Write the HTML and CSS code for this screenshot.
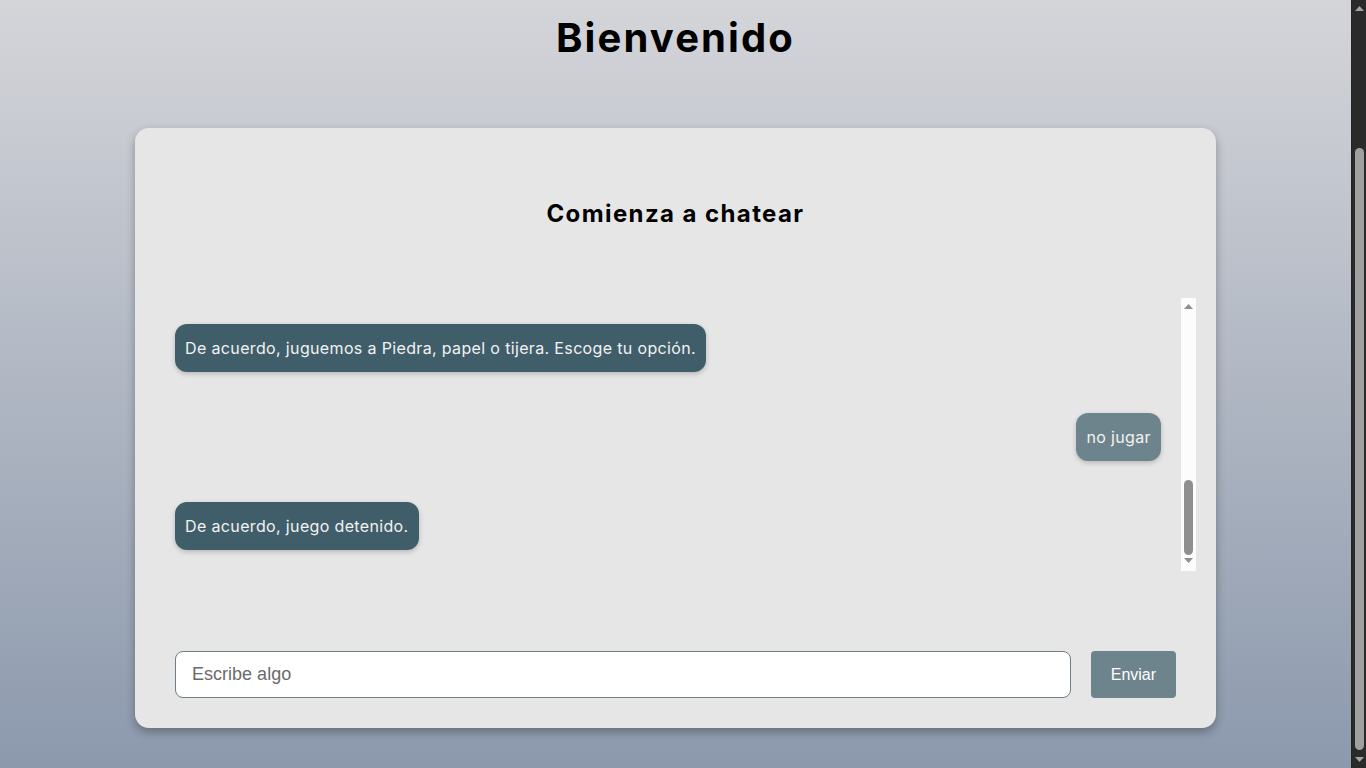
FILE: index.html
```html
<!DOCTYPE html>
<html lang="es">
<head>
<meta charset="utf-8">
<title>Chat</title>
<link rel="stylesheet" href="styles.css">
</head>
<body>
<div class="viewport">
  <div class="page">
    <h1 class="title">Bienvenido</h1>
    <main class="card">
      <h2 class="card-title">Comienza a chatear</h2>
      <div class="chat">
        <div class="messages">
          <div class="msg bot">De acuerdo, juguemos a Piedra, papel o tijera. Escoge tu opción.</div>
          <div class="msg user">no jugar</div>
          <div class="msg bot">De acuerdo, juego detenido.</div>
        </div>
        <div class="sbar sbar-light">
          <svg class="arrow" width="9" height="5" viewBox="0 0 9 5"><path d="M0 5 L4.5 0 L9 5 Z"/></svg>
          <div class="track"><div class="thumb thumb-light"></div></div>
          <svg class="arrow" width="9" height="5" viewBox="0 0 9 5"><path d="M0 0 L4.5 5 L9 0 Z"/></svg>
        </div>
      </div>
      <form class="composer">
        <input class="composer-input" type="text" placeholder="Escribe algo" autofocus>
        <button class="composer-btn" type="button">Enviar</button>
      </form>
    </main>
  </div>
  <div class="sbar sbar-dark">
    <svg class="arrow" width="9" height="5" viewBox="0 0 9 5"><path d="M0 5 L4.5 0 L9 5 Z"/></svg>
    <div class="track"><div class="thumb thumb-dark"></div></div>
    <svg class="arrow" width="9" height="5" viewBox="0 0 9 5"><path d="M0 0 L4.5 5 L9 0 Z"/></svg>
  </div>
</div>
</body>
</html>
```

FILE: styles.css
```css
html, body {
  margin: 0;
  height: 100%;
  overflow: hidden;
}
body {
  background: linear-gradient(#d4d5d9, #8c99ad);
  font-family: "Inter", "Liberation Sans", sans-serif;
  color: #000;
}
.viewport {
  display: grid;
  grid-template-columns: 1fr 15px;
  height: 100vh;
}
.page {
  min-width: 0;
}
.title {
  margin: 14px 0 66px;
  text-align: center;
  font-size: 40px;
  line-height: 48px;
  font-weight: 700;
  letter-spacing: 2.1px;
}
.card {
  width: 80%;
  height: 600px;
  box-sizing: border-box;
  margin: 0 auto;
  padding: 62px 40px 30px;
  background: #e6e6e6;
  border-radius: 14px;
  box-shadow: 0 4px 10px rgba(0, 0, 0, 0.3);
  display: flex;
  flex-direction: column;
}
.card-title {
  margin: 0 0 60px;
  text-align: center;
  font-size: 24px;
  line-height: 48px;
  font-weight: 700;
  letter-spacing: 1.4px;
}
.chat {
  display: flex;
  height: 273px;
  margin-right: -20px;
}
.messages {
  flex: 1;
  display: flex;
  flex-direction: column;
  align-items: flex-start;
  gap: 41px;
  padding: 26px 20px 0 0;
}
.msg {
  padding: 0 10px;
  height: 48px;
  line-height: 48px;
  border-radius: 12px;
  font-size: 16px;
  letter-spacing: 0.35px;
  color: #f2f2f2;
  box-shadow: 0 2px 5px rgba(0, 0, 0, 0.2);
  white-space: nowrap;
}
.msg.bot {
  background: #405e6a;
}
.msg.user {
  align-self: flex-end;
  background: #6e848c;
}

/* scrollbars */
.sbar {
  width: 15px;
  display: flex;
  flex-direction: column;
  align-items: center;
  box-sizing: border-box;
}
.sbar .arrow {
  flex: none;
}
.sbar .track {
  flex: 1;
  width: 9px;
  display: flex;
  flex-direction: column;
}
.thumb {
  border-radius: 5px;
}
.sbar-light {
  background: #fcfcfc;
  padding: 6px 0 8px;
}
.sbar-light .arrow {
  fill: #8f8f8f;
}
.sbar-light .track {
  padding: 171px 0 3px;
}
.thumb-light {
  flex: 1;
  background: #8f8f8f;
}
.sbar-dark {
  background: #2a2a2a;
  border-left: 1px solid #232323;
  padding: 6px 0 6px;
}
.sbar-dark .arrow {
  fill: #a3a3a3;
}
.sbar-dark .track {
  padding: 137px 0 7px;
}
.thumb-dark {
  flex: 1;
  background: #a0a0a0;
}

/* composer */
.composer {
  margin-top: auto;
  display: flex;
  gap: 20px;
}
.composer-input {
  flex: 1;
  height: 47px;
  box-sizing: border-box;
  padding: 0 16px;
  border: 1px solid #6f7e86;
  border-radius: 8px;
  background: #fff;
  color: #000;
  font-family: "Liberation Sans", Arial, sans-serif;
  font-size: 18px;
  outline: none;
}
.composer-input::placeholder {
  color: #6b6b6b;
}
.composer-btn {
  width: 85px;
  height: 47px;
  border: none;
  border-radius: 4px;
  background: #6e848c;
  color: #fff;
  font-family: "Liberation Sans", Arial, sans-serif;
  font-size: 16px;
}
```
